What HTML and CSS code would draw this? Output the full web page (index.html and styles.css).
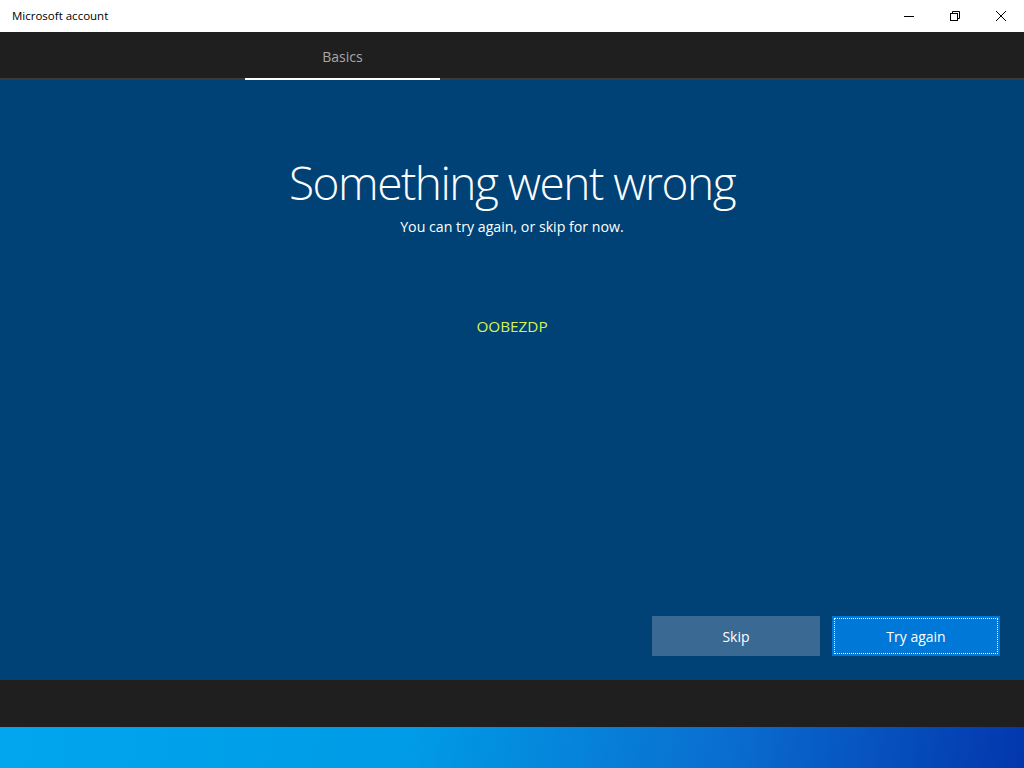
FILE: index.html
```html
<!DOCTYPE html>
<html lang="en">
<head>
    <meta charset="UTF-8">
    <meta name="viewport" content="width=device-width, initial-scale=1.0">
    <title>Microsoft account</title>
    <link rel="stylesheet" href="styles.css">
</head>
<body>
    <div class="titlebar">
        <span class="title">Microsoft account</span>
        <div class="controls">
            <span class="ctl">
                <svg width="10" height="10" viewBox="0 0 10 10"><path d="M0 5.5h10" stroke="#000" stroke-width="1"/></svg>
            </span>
            <span class="ctl">
                <svg width="10" height="10" viewBox="0 0 10 10" fill="none" stroke="#000" stroke-width="1"><rect x="0.5" y="2.5" width="7" height="7"/><path d="M2.5 2.5v-2h7v7h-2"/></svg>
            </span>
            <span class="ctl">
                <svg width="10" height="10" viewBox="0 0 10 10"><path d="M0 0l10 10M10 0l-10 10" stroke="#000" stroke-width="1"/></svg>
            </span>
        </div>
    </div>

    <div class="tabs">
        <div class="tab active">Basics</div>
    </div>

    <div class="main">
        <h1>Something went wrong</h1>
        <p class="sub">You can try again, or skip for now.</p>
        <p class="code">OOBEZDP</p>
        <div class="actions">
            <button type="button" class="btn skip">Skip</button>
            <button type="button" class="btn primary"><span>Try again</span></button>
        </div>
    </div>

    <div class="footer"></div>
    <div class="taskbar"></div>
</body>
</html>
```

FILE: styles.css
```css
/* OOBE error page */
body {
    margin: 0;
    padding: 0;
    font-family: "Open Sans", "Noto Sans", sans-serif;
    background-color: #004275;
    height: 768px;
    display: flex;
    flex-direction: column;
    overflow: hidden;
}
.titlebar {
    height: 32px;
    background-color: #fff;
    display: flex;
    align-items: center;
    justify-content: space-between;
}
.title {
    font-size: 11.5px;
    color: #000;
    margin-left: 12px;
    margin-top: -1px;
}
.controls {
    display: flex;
    height: 32px;
}
.ctl {
    width: 46px;
    display: flex;
    align-items: center;
    justify-content: center;
}
.tabs {
    height: 46px;
    background-color: #1f1f1f;
    border-bottom: 2px solid #3a3a3a;
    display: flex;
    padding-left: 245px;
}
.tab {
    width: 195px;
    text-align: center;
    color: #a8a8a8;
    font-size: 14px;
    line-height: 50px;
    height: 46px;
    margin-bottom: -2px;
}
.tab.active {
    border-bottom: 2px solid #fff;
}
.main {
    flex: 1;
    display: flex;
    flex-direction: column;
    align-items: center;
    color: #fff;
    padding-top: 74px;
}
h1 {
    font-weight: 300;
    font-size: 46px;
    letter-spacing: -1.5px;
    line-height: 56px;
    margin: 0;
}
.sub {
    font-size: 14.2px;
    margin: 7px 0 0;
}
.code {
    color: #d4f254;
    font-size: 15.3px;
    margin: 80px 0 0;
}
.actions {
    margin-top: auto;
    margin-bottom: 24px;
    align-self: flex-end;
    margin-right: 24px;
    display: flex;
    gap: 12px;
}
.btn {
    width: 168px;
    height: 40px;
    border: none;
    color: #fff;
    font-family: inherit;
    font-size: 14px;
    padding: 0;
}
.skip {
    background-color: #3a6a93;
}
.primary {
    background-color: #0078d7;
    padding: 2px;
    width: 168px;
}
.primary span {
    display: flex;
    height: 100%;
    align-items: center;
    justify-content: center;
    border: 1px dotted #fff;
    box-sizing: border-box;
}
.footer {
    height: 47px;
    background-color: #1f1f1f;
}
.taskbar {
    height: 41px;
    background: linear-gradient(100deg, #00a6ee 0%, #009be6 40%, #0a6fd0 70%, #0336ad 100%);
}
```
